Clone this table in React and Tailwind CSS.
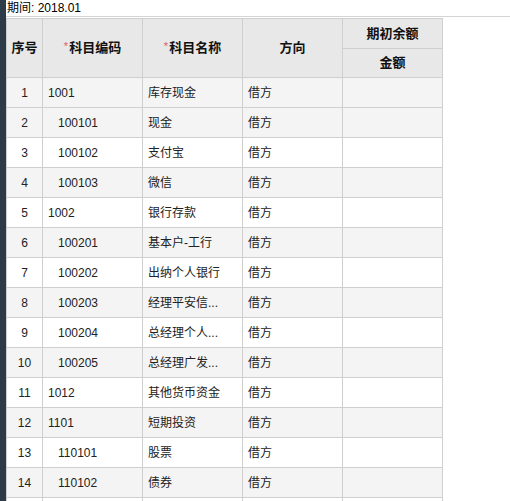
import React from "react";

const rows = [
  { code: "1001", name: "库存现金", sub: false },
  { code: "100101", name: "现金", sub: true },
  { code: "100102", name: "支付宝", sub: true },
  { code: "100103", name: "微信", sub: true },
  { code: "1002", name: "银行存款", sub: false },
  { code: "100201", name: "基本户-工行", sub: true },
  { code: "100202", name: "出纳个人银行", sub: true },
  { code: "100203", name: "经理平安信...", sub: true },
  { code: "100204", name: "总经理个人...", sub: true },
  { code: "100205", name: "总经理广发...", sub: true },
  { code: "1012", name: "其他货币资金", sub: false },
  { code: "1101", name: "短期投资", sub: false },
  { code: "110101", name: "股票", sub: true },
  { code: "110102", name: "债券", sub: true },
];

const font = "font-['Liberation_Sans','Noto_Sans_CJK_SC',sans-serif]";

export default function App() {
  return (
    <div className={`flex h-[501px] w-[510px] overflow-hidden bg-white text-[12px] text-[#222] ${font}`}>
      {/* dark side strip */}
      <div className="w-[6px] shrink-0 bg-[#2d3b49]" />

      <div className="flex min-w-0 flex-1 flex-col">
        <div className="h-[17px] shrink-0 border-b border-[#d4d4d4] pl-px leading-[16px] text-[12px] text-black">
          期间: 2018.01
        </div>

        <div className="pt-px">
          <table className="w-[436px] table-fixed border-collapse">
            <colgroup>
              <col className="w-[36px]" />
              <col className="w-[100px]" />
              <col className="w-[100px]" />
              <col className="w-[100px]" />
              <col className="w-[100px]" />
            </colgroup>
            <thead className="bg-[#e8e8e8] text-[13px] font-bold text-[#111]">
              <tr className="h-[30px]">
                <th rowSpan={2} className="border border-[#cfcfcf]">序号</th>
                <th rowSpan={2} className="border border-[#cfcfcf]">
                  <span className="relative -top-[2px] mr-px text-[11px] font-normal text-[#e05a5a]">*</span>科目编码
                </th>
                <th rowSpan={2} className="border border-[#cfcfcf]">
                  <span className="relative -top-[2px] mr-px text-[11px] font-normal text-[#e05a5a]">*</span>科目名称
                </th>
                <th rowSpan={2} className="border border-[#cfcfcf]">方向</th>
                <th className="border border-[#cfcfcf]">期初余额</th>
              </tr>
              <tr className="h-[29px]">
                <th className="border border-[#cfcfcf]">金额</th>
              </tr>
            </thead>
            <tbody>
              {rows.map((r, i) => (
                <tr
                  key={r.code}
                  className={`h-[30px] ${i === 0 || i % 2 === 1 ? "bg-[#f4f4f4]" : "bg-white"}`}
                >
                  <td className="border border-[#cfcfcf] text-center">{i + 1}</td>
                  <td className={`border border-[#cfcfcf] ${r.sub ? "pl-[15px]" : "pl-[5px]"}`}>{r.code}</td>
                  <td className="border border-[#cfcfcf] pl-[5px] whitespace-nowrap">{r.name}</td>
                  <td className="border border-[#cfcfcf] pl-[5px]">借方</td>
                  <td className="border border-[#cfcfcf]" />
                </tr>
              ))}
              <tr className="h-[30px] bg-white">
                <td className="border border-[#cfcfcf]" />
                <td className="border border-[#cfcfcf]" />
                <td className="border border-[#cfcfcf]" />
                <td className="border border-[#cfcfcf]" />
                <td className="border border-[#cfcfcf]" />
              </tr>
            </tbody>
          </table>
        </div>
      </div>
    </div>
  );
}
